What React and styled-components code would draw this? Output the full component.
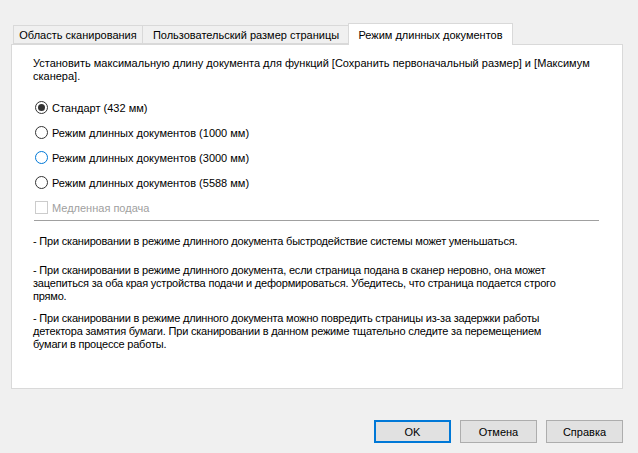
import React from "react";
import styled, { createGlobalStyle } from "styled-components";

const Global = createGlobalStyle`
  html, body {
    margin: 0;
    background: #f0f0f0;
  }
  body {
    font-family: "Liberation Sans", Arial, sans-serif;
    font-size: 11px;
    color: #000;
  }
`;

const Dialog = styled.div`
  width: 638px;
  height: 453px;
  box-sizing: border-box;
  padding: 23px 15px 0 11px;
`;

const TabBar = styled.div`
  display: flex;
  align-items: flex-end;
  height: 21px;
  padding-left: 2px;
  position: relative;
  z-index: 1;
`;

const Tab = styled.div`
  box-sizing: border-box;
  width: ${p => p.w}px;
  height: ${p => (p.active ? "22px" : "19px")};
  margin: ${p => (p.active ? "0 -2px -1px -2px" : "0")};
  display: flex;
  align-items: center;
  justify-content: center;
  background: ${p => (p.active ? "#fff" : "#f0f0f0")};
  border: 1px solid #d9d9d9;
  border-bottom: ${p => (p.active ? "none" : "1px solid #d9d9d9")};
  border-left: ${p => (p.first || p.active ? "1px solid #d9d9d9" : "none")};
  white-space: nowrap;
  position: relative;
  z-index: ${p => (p.active ? 2 : 1)};
`;

const Panel = styled.div`
  box-sizing: border-box;
  height: 345px;
  background: #fff;
  border: 1px solid #d9d9d9;
  padding: 12px 24px 0 21px;
`;

const Intro = styled.p`
  margin: 0;
  line-height: 13px;
`;

const Options = styled.div`
  display: flex;
  flex-direction: column;
  gap: 12px;
  margin: 18px 0 0 2px;
`;

const Option = styled.label`
  display: flex;
  align-items: center;
  gap: 4px;
  height: 13px;
  color: ${p => (p.disabled ? "#a0a0a0" : "#000")};
`;

const Radio = styled.span`
  box-sizing: border-box;
  width: 13px;
  height: 13px;
  border-radius: 50%;
  border: 1px solid ${p => (p.focus ? "#0078d7" : "#333")};
  display: flex;
  align-items: center;
  justify-content: center;
  &::after {
    content: "";
    width: 7px;
    height: 7px;
    border-radius: 50%;
    background: #333;
    display: ${p => (p.checked ? "block" : "none")};
  }
`;

const Check = styled.span`
  box-sizing: border-box;
  width: 13px;
  height: 13px;
  border: 1px solid #cccccc;
  background: #fff;
`;

const Rule = styled.hr`
  margin: 6px 0 0 1px;
  width: 565px;
  border: none;
  border-top: 1px solid #a0a0a0;
  height: 0;
`;

const Notes = styled.div`
  margin-top: 14px;
  width: 540px;
  display: flex;
  flex-direction: column;
  gap: 9px;
  letter-spacing: -0.2px;
`;

const Note = styled.p`
  margin: 0;
  line-height: 13px;
  padding-top: ${p => (p.gap ? "7px" : "0")};
`;

const Footer = styled.div`
  display: flex;
  justify-content: flex-end;
  gap: 9px;
  margin-top: 31px;
`;

const Button = styled.button`
  box-sizing: border-box;
  width: 77px;
  height: 23px;
  background: #e1e1e1;
  border: ${p => (p.primary ? "2px solid #0078d7" : "1px solid #adadad")};
  font: inherit;
  color: #000;
  padding: 0;
`;

const options = [
  "Стандарт (432 мм)",
  "Режим длинных документов (1000 мм)",
  "Режим длинных документов (3000 мм)",
  "Режим длинных документов (5588 мм)"
];

export default function App() {
  return (
    <Dialog>
      <Global />
      <TabBar>
        <Tab first w={130}>Область сканирования</Tab>
        <Tab w={207}>Пользовательский размер страницы</Tab>
        <Tab active w={165}>Режим длинных документов</Tab>
      </TabBar>
      <Panel>
        <Intro>
          Установить максимальную длину документа для функций [Сохранить первоначальный размер] и [Максимум сканера].
        </Intro>
        <Options>
          {options.map((o, i) => (
            <Option key={o}>
              <Radio checked={i === 0} focus={i === 2} />
              {o}
            </Option>
          ))}
          <Option disabled>
            <Check />
            Медленная подача
          </Option>
        </Options>
        <Rule />
        <Notes>
          <Note>- При сканировании в режиме длинного документа быстродействие системы может уменьшаться.</Note>
          <Note gap>
            - При сканировании в режиме длинного документа, если страница подана в сканер неровно, она может зацепиться за оба края устройства подачи и деформироваться. Убедитесь, что страница подается строго прямо.
          </Note>
          <Note>
            - При сканировании в режиме длинного документа можно повредить страницы из-за задержки работы детектора замятия бумаги. При сканировании в данном режиме тщательно следите за перемещением бумаги в процессе работы.
          </Note>
        </Notes>
      </Panel>
      <Footer>
        <Button primary>OK</Button>
        <Button>Отмена</Button>
        <Button>Справка</Button>
      </Footer>
    </Dialog>
  );
}
